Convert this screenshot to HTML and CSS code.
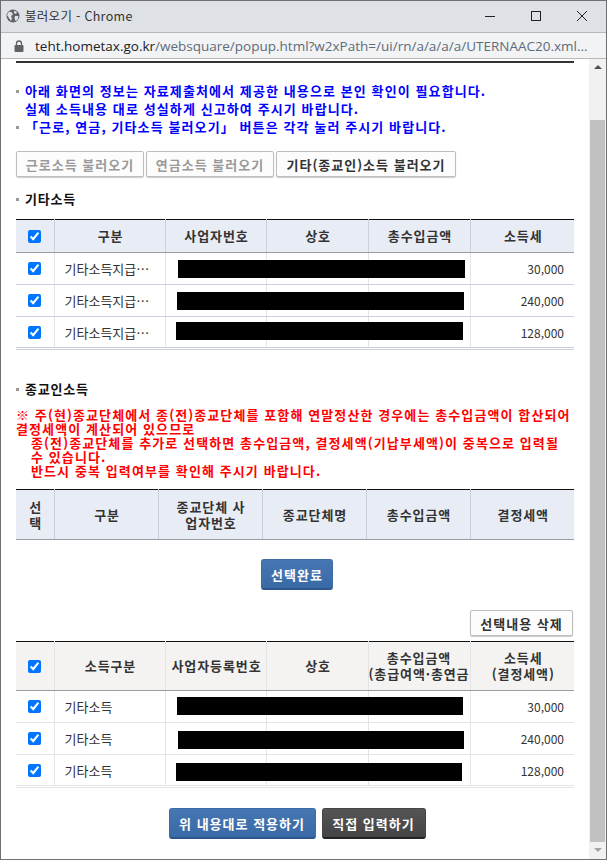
FILE: index.html
```html
<!DOCTYPE html>
<html lang="ko">
<head>
    <meta charset="UTF-8">
    <title>불러오기 - Chrome</title>
    <link rel="stylesheet" href="styles.css">
</head>
<body>
<div class="window">
    <div class="titlebar">
        <svg class="globe" width="14" height="14" viewBox="0 0 14 14"><circle cx="7" cy="7" r="6.5" fill="#5f6368"/><path d="M3 2.500l3 1 1 2-2 1.500 1 2.500-1 2.500-2-3-2-3zM8 1.500l3 1.500-1 2-2-1zM9 7l3.500 0-1 4-2 1-1-3z" fill="#dee1e6"/></svg>
        <span class="title">불러오기 - Chrome</span>
        <div class="winbtns">
            <svg width="12" height="12" viewBox="0 0 12 12"><path d="M1 6.500h10" stroke="#222" fill="none"/></svg>
            <svg width="12" height="12" viewBox="0 0 12 12"><rect x="1.500" y="1.500" width="9" height="9" stroke="#222" fill="none"/></svg>
            <svg width="12" height="12" viewBox="0 0 12 12"><path d="M1 1l10 10M11 1L1 11" stroke="#222" fill="none"/></svg>
        </div>
    </div>
    <div class="addressbar">
        <svg width="10" height="12" viewBox="0 0 10 12"><rect x="0.500" y="5" width="9" height="7" rx="1" fill="#5f6368"/><path d="M2.500 5V3.500a2.500 2.500 0 0 1 5 0V5" stroke="#5f6368" stroke-width="1.300" fill="none"/></svg>
        <span class="url"><b>teht.hometax.go.kr</b>/websquare/popup.html?w2xPath=/ui/rn/a/a/a/a/UTERNAAC20.xml...</span>
    </div>
    <div class="viewport">
        <div class="content">
            <ul class="notice">
                <li>아래 화면의 정보는 자료제출처에서 제공한 내용으로 본인 확인이 필요합니다.<br>실제 소득내용 대로 성실하게 신고하여 주시기 바랍니다.</li>
                <li>「근로, 연금, 기타소득 불러오기」 버튼은 각각 눌러 주시기 바랍니다.</li>
            </ul>
            <div class="tabs">
                <button class="btn-white off w128">근로소득 불러오기</button>
                <button class="btn-white off w128">연금소득 불러오기</button>
                <button class="btn-white w180">기타(종교인)소득 불러오기</button>
            </div>
            <h2 class="section first">기타소득</h2>
            <div class="tablewrap">
                <table class="grid">
                    <colgroup><col class="c1"><col class="c2"><col class="c3"><col class="c4"><col class="c5"><col class="c6"></colgroup>
                    <thead><tr><th><input type="checkbox" checked></th><th>구분</th><th>사업자번호</th><th>상호</th><th>총수입금액</th><th>소득세</th></tr></thead>
                    <tbody>
                        <tr><td class="ctr"><input type="checkbox" checked></td><td>기타소득지급…</td><td></td><td></td><td></td><td class="num">30,000</td></tr>
                        <tr><td class="ctr"><input type="checkbox" checked></td><td>기타소득지급…</td><td></td><td></td><td></td><td class="num">240,000</td></tr>
                        <tr><td class="ctr"><input type="checkbox" checked></td><td>기타소득지급…</td><td></td><td></td><td></td><td class="num">128,000</td></tr>
                    </tbody>
                </table>
                <div class="mask m1"></div>
                <div class="mask m2"></div>
                <div class="mask m3"></div>
            </div>
            <h2 class="section second">종교인소득</h2>
            <div class="warning">
                <p>※ 주(현)종교단체에서 종(전)종교단체를 포함해 연말정산한 경우에는 총수입금액이 합산되어 결정세액이 계산되어 있으므로</p>
                <p class="indent">종(전)종교단체를 추가로 선택하면 총수입금액, 결정세액(기납부세액)이 중복으로 입력될 수 있습니다.</p>
                <p class="indent">반드시 중복 입력여부를 확인해 주시기 바랍니다.</p>
            </div>
            <table class="grid empty">
                <colgroup><col class="c1"><col class="d2"><col class="d3"><col class="d4"><col class="d5"><col class="d6"></colgroup>
                <thead><tr><th>선<br>택</th><th>구분</th><th>종교단체 사<br>업자번호</th><th>종교단체명</th><th>총수입금액</th><th>결정세액</th></tr></thead>
            </table>
            <div class="center-row"><button class="btn-blue small">선택완료</button></div>
            <div class="right-row"><button class="btn-white w103">선택내용 삭제</button></div>
            <div class="tablewrap">
                <table class="grid result">
                    <colgroup><col class="c1"><col class="c2"><col class="c3"><col class="c4"><col class="c5"><col class="c6"></colgroup>
                    <thead><tr><th><input type="checkbox" checked></th><th>소득구분</th><th>사업자등록번호</th><th>상호</th><th class="tight">총수입금액<br>(총급여액·총연금</th><th>소득세<br>(결정세액)</th></tr></thead>
                    <tbody>
                        <tr><td class="ctr"><input type="checkbox" checked></td><td>기타소득</td><td></td><td></td><td></td><td class="num">30,000</td></tr>
                        <tr><td class="ctr"><input type="checkbox" checked></td><td>기타소득</td><td></td><td></td><td></td><td class="num">240,000</td></tr>
                        <tr><td class="ctr"><input type="checkbox" checked></td><td>기타소득</td><td></td><td></td><td></td><td class="num">128,000</td></tr>
                    </tbody>
                </table>
                <div class="mask r1"></div>
                <div class="mask r2"></div>
                <div class="mask r3"></div>
            </div>
            <div class="actions">
                <button class="btn-blue wide">위 내용대로 적용하기</button>
                <button class="btn-dark">직접 입력하기</button>
            </div>
        </div>
        <div class="scrollbar">
            <div class="arrow up"></div>
            <div class="track"><div class="thumb"></div></div>
            <div class="arrow down"></div>
        </div>
    </div>
</div>
</body>
</html>
```

FILE: styles.css
```css
* {
    box-sizing: border-box;
}
html, body {
    margin: 0;
    padding: 0;
    background: #fff;
}
body {
    font-family: "Noto Sans CJK KR", "Liberation Sans", sans-serif;
    font-size: 13px;
    color: #222;
}
.window {
    display: flex;
    flex-direction: column;
    width: 607px;
    height: 860px;
    border: 1px solid #6f7072;
    overflow: hidden;
}
.titlebar {
    display: flex;
    align-items: center;
    height: 31px;
    padding: 0 0 2px 5px;
    background: #dee1e6;
}
.title {
    margin-left: 5px;
    font-size: 12.5px;
    letter-spacing: 0.3px;
    color: #333;
}
.winbtns {
    display: flex;
    gap: 34px;
    margin-left: auto;
    margin-right: 18px;
}
.addressbar {
    display: flex;
    align-items: center;
    height: 27px;
    padding-left: 13px;
    background: #f1f3f4;
    border-top: 1px solid #b6b8bb;
    border-bottom: 1px solid #b6b8bb;
}
.url {
    margin-left: 11px;
    font-family: "Open Sans", "Liberation Sans", sans-serif;
    font-size: 13.5px;
    color: #5f6b7a;
    white-space: nowrap;
}
.url b {
    font-weight: normal;
    color: #202124;
}
.viewport {
    display: flex;
    flex: 1;
    min-height: 0;
}
.content {
    width: 589px;
    padding: 2px 15px 0;
    overflow: hidden;
}
.notice {
    margin: 0;
    padding: 19px 0 0;
    border-top: 2px solid #333;
    list-style: none;
    font-size: 13px;
    font-weight: bold;
    line-height: 18px;
    letter-spacing: 1.1px;
    color: #00f;
}
.notice li {
    position: relative;
    padding-left: 9px;
}
.notice li::before, .section::before {
    content: "";
    position: absolute;
    left: 0;
    top: 8px;
    width: 3px;
    height: 3px;
    background: #999;
}
.tabs {
    display: flex;
    gap: 2px;
    margin-top: 15px;
}
button {
    font-family: inherit;
    font-weight: bold;
    font-size: 13px;
    letter-spacing: 1px;
    padding: 0;
    cursor: pointer;
}
.btn-white {
    height: 26px;
    color: #333;
    background: #fcfcfc;
    border: 1px solid #bdbdbd;
    border-radius: 2px;
    box-shadow: 0 1px 1px #ccc;
}
.btn-white.off {
    color: #999;
}
.w128 { width: 128px; }
.w180 { width: 180px; }
.w103 { width: 103px; }
.section {
    position: relative;
    margin: 0;
    padding-left: 9px;
    font-size: 13px;
    line-height: 18px;
    letter-spacing: 0.8px;
    color: #111;
}
.section.first {
    margin-top: 13px;
}
.section.second {
    margin-top: 30px;
}
.tablewrap {
    position: relative;
}
.grid {
    width: 558px;
    margin-top: 11px;
    border-collapse: collapse;
    table-layout: fixed;
    border-top: 1px solid #111;
}
.c1 { width: 38px; }
.c2 { width: 111px; }
.c3 { width: 101px; }
.c4 { width: 102px; }
.c5 { width: 102px; }
.c6 { width: 104px; }
.d2 { width: 104px; }
.d3 { width: 104px; }
.d4 { width: 104px; }
.d5 { width: 104px; }
.d6 { width: 104px; }
.grid th {
    height: 33px;
    padding: 0 0 0 2px;
    font-size: 13px;
    line-height: 16px;
    letter-spacing: 0.9px;
    color: #333;
    background: #e8edf5;
    border-left: 1px solid #c9d0dc;
    border-bottom: 1px solid #9a9da3;
}
.grid th:first-child, .grid td:first-child {
    border-left: 0;
}
.grid td {
    height: 32px;
    padding: 0 0 0 10px;
    font-size: 13px;
    color: #333;
    border-left: 1px solid #e4e4e4;
    border-bottom: 1px solid #c9d0dc;
    white-space: nowrap;
    overflow: hidden;
}
.grid td.ctr {
    padding: 0;
    text-align: center;
}
.grid td.num {
    padding: 0 10px 0 0;
    font-size: 12px;
    text-align: right;
}
.grid input {
    display: block;
    width: 13px;
    height: 13px;
    margin: 0 auto 0 10px;
    accent-color: #0075ff;
}
.grid td input {
    margin-left: 12px;
}
.grid tbody {
    border-bottom: 3px double #c9d0dc;
}
.grid.empty {
    margin-top: 11px;
}
.grid.empty th {
    height: 50px;
}
.grid.result {
    margin-top: 5px;
}
.grid.result th {
    height: 49px;
    background: #f4f3f2;
    border-left-color: #e4e4e4;
}
.grid.result td {
    border-bottom-color: #e4e4e4;
}
.grid.result tbody {
    border-bottom-color: #e4e4e4;
}
.grid th.tight {
    padding-left: 0;
    white-space: nowrap;
    overflow: hidden;
}
.mask {
    position: absolute;
    height: 18px;
    background: #000;
}
.m1 { left: 162px; top: 41px; width: 287px; }
.m2 { left: 161px; top: 73px; width: 287px; }
.m3 { left: 160px; top: 103px; width: 287px; }
.r1 { left: 161px; top: 56px; width: 286px; }
.r2 { left: 162px; top: 90px; width: 286px; }
.r3 { left: 160px; top: 122px; width: 286px; }
.warning {
    margin-top: 10px;
    font-size: 13px;
    font-weight: bold;
    line-height: 14px;
    letter-spacing: 1.1px;
    color: #f00;
}
.warning p {
    margin: 0;
}
.warning .indent {
    padding-left: 15px;
}
.center-row {
    display: flex;
    justify-content: center;
    margin-top: 19px;
    padding-left: 4px;
}
.right-row {
    display: flex;
    justify-content: flex-end;
    margin-top: 20px;
    padding-right: 1px;
}
.btn-blue, .btn-dark {
    height: 31px;
    color: #fff;
    border-radius: 3px;
}
.btn-blue {
    background: linear-gradient(#4677b2, #3a6aa6);
    border: 1px solid #3d6ca6;
    border-bottom: 2px solid #2b558c;
}
.btn-blue.small {
    width: 72px;
}
.btn-blue.wide {
    width: 147px;
}
.btn-dark {
    width: 104px;
    background: linear-gradient(#555, #444);
    border: 1px solid #444;
    border-bottom: 2px solid #222;
}
.actions {
    display: flex;
    justify-content: center;
    gap: 6px;
    margin-top: 20px;
    padding-left: 4px;
}
.scrollbar {
    display: flex;
    flex-direction: column;
    width: 17px;
    background: #f1f1f1;
}
.arrow {
    height: 17px;
    position: relative;
}
.arrow::after {
    content: "";
    position: absolute;
    left: 5px;
    top: 6px;
    border-left: 4px solid transparent;
    border-right: 4px solid transparent;
}
.arrow.up::after {
    border-bottom: 4px solid #505050;
}
.arrow.down::after {
    border-top: 4px solid #a3a3a3;
}
.track {
    flex: 1;
    padding-top: 44px;
}
.thumb {
    width: 15px;
    height: 100%;
    margin: 0 auto;
    background: #c1c1c1;
}
```
